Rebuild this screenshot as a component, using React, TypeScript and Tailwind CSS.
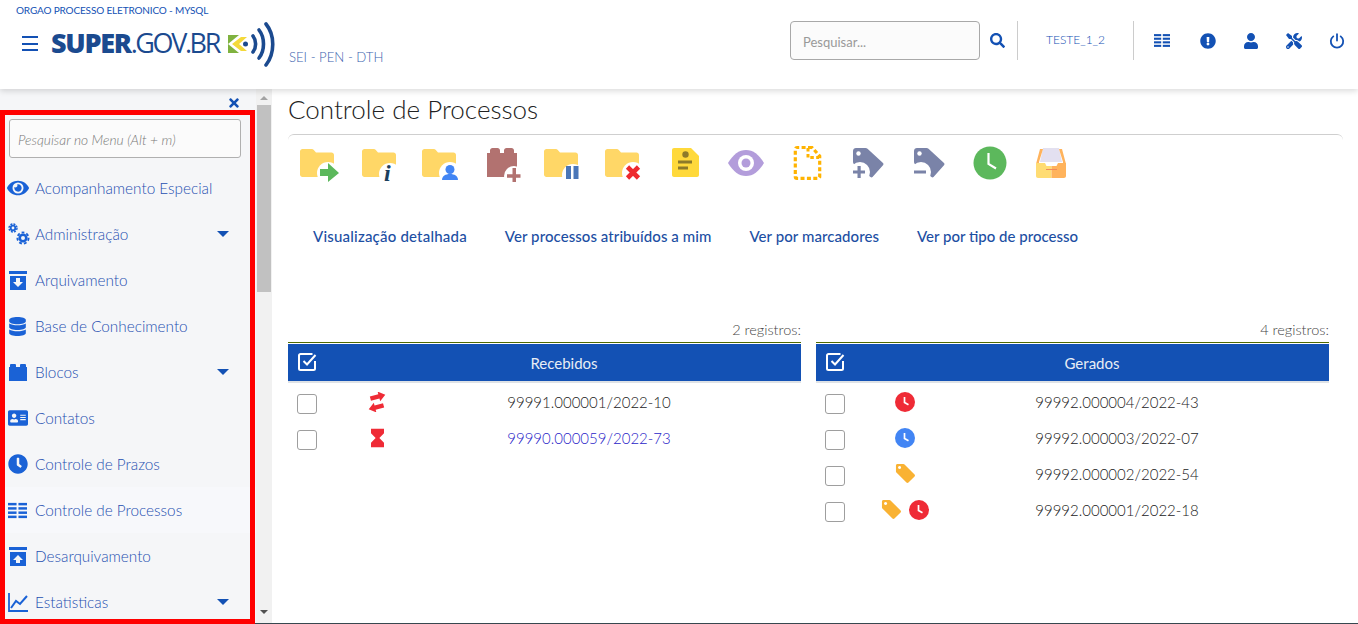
import React from "react";
import { FaEye, FaDatabase, FaAddressCard, FaClock, FaSearch, FaExclamationCircle, FaUser, FaTools, FaTimes } from "react-icons/fa";

const TableGlyph = ({ className = "" }: { className?: string }) => (
  <svg viewBox="0 0 20 16" className={className} fill="currentColor">
    <rect x="0" y="0" width="9" height="2.6" /><rect x="11" y="0" width="9" height="2.6" />
    <rect x="0" y="4.5" width="9" height="2.6" /><rect x="11" y="4.5" width="9" height="2.6" />
    <rect x="0" y="9" width="9" height="2.6" /><rect x="11" y="9" width="9" height="2.6" />
    <rect x="0" y="13.4" width="9" height="2.6" /><rect x="11" y="13.4" width="9" height="2.6" />
  </svg>
);

const ArchiveGlyph = ({ up = false }: { up?: boolean }) => (
  <svg viewBox="0 0 20 20" className="w-5 h-5" fill="currentColor">
    <rect x="1" y="1" width="18" height="3" />
    <path d="M2 6h16v14H2z" />
    <path d={up ? "M10 9l5 5h-3v3H8v-3H5z" : "M8 8h4v4h3l-5 5-5-5h3z"} fill="#f5f6f8" />
  </svg>
);

const BlockGlyph = () => (
  <svg viewBox="0 0 20 20" className="w-5 h-5" fill="currentColor">
    <path d="M1 19V5h1V3.2C2 2.5 2.500 2 3.200 2h3.600C7.500 2 8 2.500 8 3.200V5h4V3.200C12 2.500 12.500 2 13.200 2h3.600C17.500 2 18 2.500 18 3.200V5h1v14z" />
  </svg>
);

const GearsGlyph = () => (
  <svg viewBox="0 0 22 22" className="h-[22px] w-[22px]" fill="none" stroke="currentColor">
    <circle cx="5" cy="5" r="2.300" strokeWidth="1.800" />
    <circle cx="5" cy="5" r="4" strokeWidth="1.400" strokeDasharray="2 1.140" />
    <circle cx="15" cy="15" r="3.300" strokeWidth="2.600" />
    <circle cx="15" cy="15" r="5.600" strokeWidth="1.900" strokeDasharray="2.800 2.060" />
  </svg>
);

const ChartGlyph = () => (
  <svg viewBox="0 0 20 20" className="h-5 w-5" fill="none" stroke="currentColor">
    <path d="M1 1v18h19" strokeWidth="1.800" />
    <path d="M3 16l5-7 4 3 7-8" strokeWidth="2" />
  </svg>
);

const PowerGlyph = () => (
  <svg viewBox="0 0 16 16" className="ml-[27px] h-[16px] w-[16px]" fill="none" stroke="currentColor" strokeWidth="1.800" strokeLinecap="round">
    <path d="M8 1.200v6.300" />
    <path d="M4.300 3.400a6.200 6.200 0 1 0 7.400 0" />
  </svg>
);

const HeaderCheck = () => (
  <svg viewBox="0 0 20 20" className="ml-[9px] h-5 w-5" fill="none" stroke="#fff" strokeWidth="2">
    <path d="M15.500 2H3.500C2.700 2 2 2.700 2 3.500v13C2 17.300 2.700 18 3.500 18h13c.8 0 1.500-.7 1.500-1.500V9" />
    <path d="M6.500 9l3.500 3.500L18.500 3" />
  </svg>
);

const SwapArrows = () => (
  <svg viewBox="0 0 20 18" className="h-[20px] w-[22px]" fill="#ef2b36">
    <g transform="rotate(-15 10 9)">
      <path d="M5 2.500h8V0l6 4.500L13 9V6.500H5z" />
      <path d="M15 11.500H7V9l-6 4.500L7 18v-2.500h8z" />
    </g>
  </svg>
);

const Hourglass = () => (
  <svg viewBox="0 0 14 20" className="h-5 w-[13px]" fill="#ef2b36">
    <path d="M0 0h14v5L9 10l5 5v5H0v-5l5-5-5-5z" />
  </svg>
);

const Tag = ({ className = "" }: { className?: string }) => (
  <svg viewBox="0 0 22 22" className={className}>
    <path fillRule="evenodd" fill="#f9b233" d="M1 2.500C1 1.700 1.700 1 2.500 1h6.300c.5 0 .9.200 1.200.5l10.500 10.500c.6.600.6 1.500 0 2.100l-6.400 6.400c-.6.600-1.500.6-2.100 0L1.500 10C1.200 9.700 1 9.300 1 8.800zM4.800 3.200a1.600 1.600 0 1 0 .01 0z" />
  </svg>
);

const ClockDot = ({ color }: { color: string }) => (
  <svg viewBox="0 0 20 20" className="h-5 w-5">
    <circle cx="10" cy="10" r="10" fill={color} />
    <path d="M9.500 5v5.500l4 2.300" fill="none" stroke="#fff" strokeWidth="1.700" />
  </svg>
);

const Folder = () => (
  <path fill="#ffd767" d="M1 6.500C1 5.100 2.100 4 3.500 4h9.300c.8 0 1.500.4 2 1l2.200 2.500h15.500c1.400 0 2.500 1.100 2.500 2.500v19.500c0 1.400-1.100 2.500-2.500 2.500h-29C2.100 32 1 30.900 1 29.500z" />
);
const Bite = ({ cx = 29, cy = 28, r = 11 }: { cx?: number; cy?: number; r?: number }) => <circle cx={cx} cy={cy} r={r} fill="#fff" />;

const tagBody = "M5 6c0-1.700 1.300-3 3-3h9.500c.8 0 1.500.3 2 .8L35 18c.6.600.6 1.700 0 2.300L24.500 32c-.6.600-1.500.6-2 0L5.800 19c-.5-.5-.8-1.200-.8-2z";

const toolbar: React.ReactNode[] = [
  <><Folder /><Bite /><path fill="#5cb85c" d="M21 24h8v-6l11 10-11 9v-6h-8z" /></>,
  <><g transform="translate(1 0)"><Folder /></g><Bite cx={30} cy={29} /><text x="24" y="36" fontFamily="Liberation Serif, serif" fontStyle="italic" fontWeight="700" fontSize="24" fill="#1c3f5e">i</text></>,
  <><Folder /><Bite /><circle cx="29" cy="24.500" r="4.500" fill="#4285f4" /><path fill="#4285f4" d="M21 35c0-4 3.500-6 8-6s8 2 8 6z" /></>,
  <><path fill="#b27270" d="M5 32V8h3V5.500C8 4.100 9.100 3 10.500 3h5c1.400 0 2.500 1.100 2.500 2.500V8h4V5.500C22 4.100 23.100 3 24.500 3h5C30.900 3 32 4.100 32 5.500V8h3v24z" /><Bite cx={32} cy={31} r={10} /><path fill="#b27270" d="M30.500 23h3.500v6.300h4.500v3.400H34V37h-3.500v-4.300H25v-3.400h5.500z" /></>,
  <><Folder /><Bite cx={30} cy={30} /><rect x="23" y="21" width="5" height="13" fill="#4a76b8" /><rect x="30.500" y="21" width="5" height="13" fill="#4a76b8" /></>,
  <><Folder /><Bite /><path d="M23.500 22l11 11M34.500 22l-11 11" stroke="#ee2a2e" strokeWidth="4.600" fill="none" /></>,
  <><path fill="#ffd93b" d="M9 3h17l8 8v19c0 1.100-.9 2-2 2H9c-1.100 0-2-.9-2-2V5c0-1.100.9-2 2-2z" /><circle cx="20.500" cy="9.500" r="3.200" fill="#8d7a2a" /><rect x="13" y="15.500" width="14" height="3" fill="#8d7a2a" /><rect x="13" y="21.500" width="10" height="3" fill="#8d7a2a" /></>,
  <><path fill="#b39ddb" d="M2 18C7 9.500 13 5 20 5s13 4.500 18 13c-5 8.500-11 13-18 13S7 26.500 2 18z" /><circle cx="20" cy="18" r="8" fill="#fff" /><circle cx="20" cy="18" r="4.500" fill="#b39ddb" /></>,
  <><path fill="none" stroke="#ffb300" strokeWidth="3.200" strokeDasharray="4 2.400" d="M25 2.500H10C9 2.500 8.300 3.200 8.300 4.200v27.500c0 1 .7 1.600 1.700 1.600h21c1 0 1.700-.6 1.700-1.600V11z" /><path fill="none" stroke="#ffb300" strokeWidth="3" strokeDasharray="3.500 2.400" d="M21 3v9.500h11" /></>,
  <><path fill="#7a83a8" d={tagBody} /><circle cx="10.500" cy="8.500" r="2.200" fill="#fff" /><Bite cx={12} cy={27} r={10} /><path fill="#7a83a8" d="M9.500 21h3.200v4.500H17v3h-4.300V33H9.500v-4.500H5v-3h4.500z" /></>,
  <><path fill="#7a83a8" d={tagBody} /><circle cx="10.500" cy="8.500" r="2.200" fill="#fff" /><Bite cx={12} cy={27} r={10} /><rect x="5" y="25.500" width="12" height="3" fill="#7a83a8" /></>,
  <><circle cx="20" cy="18" r="16.500" fill="#5cb85c" /><path d="M18.500 8v11l7.500 4.500" fill="none" stroke="#fff" strokeWidth="2.200" /></>,
  <><path fill="#e3e0f0" d="M12 3h16l3 14H9z" /><path fill="#ffb35c" d="M9 4h3L8 17v2H5zM28 4h3l4 15h-3v-2z" /><path fill="#ffdc73" d="M5 18h9l1.500 3h5v12H7c-1.100 0-2-.9-2-2z" /><path fill="#ffb35c" d="M20.500 21h5L27 18h8v13c0 1.100-.9 2-2 2H20.500z" /><rect x="15" y="24" width="11" height="1" fill="#f08a5c" /></>,
];

const menu: { label: string; icon: React.ReactNode; caret?: boolean; active?: boolean }[] = [
  { label: "Acompanhamento Especial", icon: <FaEye className="-ml-[1px] h-[22px] w-[22px]" /> },
  { label: "Administração", icon: <GearsGlyph />, caret: true },
  { label: "Arquivamento", icon: <ArchiveGlyph /> },
  { label: "Base de Conhecimento", icon: <FaDatabase className="ml-[1px] h-[19px] w-[17px]" /> },
  { label: "Blocos", icon: <BlockGlyph />, caret: true },
  { label: "Contatos", icon: <FaAddressCard className="h-5 w-5" /> },
  { label: "Controle de Prazos", icon: <FaClock className="h-5 w-5" /> },
  { label: "Controle de Processos", icon: <TableGlyph className="h-[17px] w-[19px]" />, active: true },
  { label: "Desarquivamento", icon: <ArchiveGlyph up /> },
  { label: "Estatisticas", icon: <ChartGlyph />, caret: true },
];

const Check = () => <span className="block h-5 w-5 rounded-[3px] border border-[#9e9e9e] bg-white" />;

type Row = { icons: React.ReactNode; num: string; link?: boolean };

const ProcTable = ({ title, count, rows }: { title: string; count: string; rows: Row[] }) => (
  <section className="w-[513px]">
    <p className="h-[22px] text-right text-[14.5px] font-light leading-[22px] text-[#444]">{count}</p>
    <div className="mt-[1px] border-t border-[#4f6a00] pt-[1px]">
      <div className="grid h-[39px] grid-cols-[58px_436px] items-center border-b-2 border-[#dee2e6] bg-[#1351b4] text-white">
        <HeaderCheck />
        <span className="pt-[2px] text-center text-[15px] text-[#e8edf5]">{title}</span>
      </div>
    </div>
    <div className="mt-[2px]">
      {rows.map((r) => (
        <div key={r.num} className="grid h-9 grid-cols-[58px_62px_362px] items-center">
          <span className="ml-[9px] mt-[2px]"><Check /></span>
          <span className="flex -translate-y-[1px] items-center justify-center gap-[7px]">{r.icons}</span>
          <span className={`text-center text-[15px] font-light ${r.link ? "text-[#2a25c8]" : "text-[#222]"}`}>{r.num}</span>
        </div>
      ))}
    </div>
  </section>
);

export default function App() {
  return (
    <div className="relative flex h-[624px] w-full flex-col overflow-hidden bg-white font-['Lato','Open_Sans',sans-serif]">
      <header className="relative z-10 flex h-[89px] shrink-0 items-start bg-white shadow-[0_2px_6px_rgba(0,0,0,0.15)]">
        <div className="w-[420px] shrink-0 pl-[16px]">
          <p className="mt-[3px] h-[14px] text-[10px] leading-[14px] tracking-[-0.15px] text-[#1351b4]">ORGAO PROCESSO ELETRONICO - MYSQL</p>
          <div className="mt-[5px] flex items-start">
            <button className="ml-[6px] mt-[14px] flex h-[15px] w-4 flex-col justify-between" aria-label="menu">
              <span className="block h-[2px] w-4 bg-[#1351b4]" />
              <span className="block h-[2px] w-4 bg-[#1351b4]" />
              <span className="block h-[2px] w-4 bg-[#1351b4]" />
            </button>
            <p className="ml-[13px] mt-[5px] whitespace-nowrap font-['Open_Sans',sans-serif] text-[27px] leading-[32px] tracking-[-1.3px] text-[#1b4a8f]">
              <span className="font-extrabold">SUPER</span><span className="font-normal tracking-[-2.4px]">.GOV.BR</span>
            </p>
            <svg viewBox="0 0 52 46" className="ml-[7px] h-[46px] w-[52px] shrink-0">
              <rect x="2" y="13" width="22" height="18" fill="#7fb23f" />
              <path d="M2 22l11-9h11v18H13z" fill="#fff" />
              <path d="M6 22l9-7h6l-8 7 8 7h-6z" fill="#f4d93a" />
              <circle cx="19.500" cy="22" r="2.500" fill="#1b4a8f" />
              <g fill="none" stroke="#1b4a8f" strokeWidth="3.600" strokeLinecap="round">
                <path d="M27 14c3.500 4.500 3.500 11.500 0 16" />
                <path d="M33 8c6 7.500 6 20.500 0 28" />
                <path d="M40 2c9 11 9 29 0 41" />
              </g>
            </svg>
            <span className="ml-[11px] mt-[27px] whitespace-nowrap text-[13.2px] font-light leading-[16px] text-[#3a5fae]">SEI - PEN - DTH</span>
          </div>
        </div>
        <div className="ml-auto flex items-center pt-[21px]">
          <input readOnly placeholder="Pesquisar..." className="h-[39px] w-[190px] rounded-[4px] border border-[#a8a8a8] bg-[#fbfbfb] px-3 pt-[2px] text-[13px] outline-none placeholder:text-[#999]" />
          <FaSearch className="ml-[10px] h-[15px] w-[15px] text-[#1351b4]" />
          <span className="ml-[12px] h-[39px] w-px bg-[#ccc]" />
          <span className="w-[115px] -translate-y-[1px] text-center text-[12px] font-light text-[#1351b4]">TESTE_1_2</span>
          <span className="h-[39px] w-px bg-[#ccc]" />
          <div className="ml-[20px] flex items-center pr-[13px] text-[#1351b4]">
            <TableGlyph className="h-[15px] w-[16px]" />
            <FaExclamationCircle className="ml-[30px] h-[16px] w-[16px]" />
            <FaUser className="ml-[28px] h-[16px] w-[14px]" />
            <FaTools className="ml-[28px] h-[16px] w-[16px]" />
            <PowerGlyph />
          </div>
        </div>
      </header>

      <div className="flex min-h-0 flex-1">
        <aside className="flex w-[272px] shrink-0 overflow-hidden">
          <nav className="w-[256px] shrink-0 bg-[#f5f6f8]">
            <div className="flex h-[30px] items-start justify-end pr-[15px] pt-[7px]">
              <FaTimes className="h-[14px] w-[14px] text-[#1351b4]" />
            </div>
            <div className="mb-[7px] ml-[9px] w-[232px]">
              <input readOnly placeholder="Pesquisar no Menu (Alt + m)" className="h-[39px] w-full rounded-[3px] border border-[#b0b0b0] bg-[#fbfbfb] px-2 pt-[2px] text-[13.8px] font-light italic outline-none placeholder:text-[#777]" />
            </div>
            <ul>
              {menu.map((m) => (
                <li key={m.label} className={`flex h-[46px] items-center pl-[8px] pr-[27px] ${m.active ? "bg-[#f7f8fb]" : ""}`}>
                  <span className="flex w-[27px] shrink-0 text-[#1a62d6]">{m.icon}</span>
                  <span className="flex-1 text-[15.3px] font-light text-[#1f4fb0]">{m.label}</span>
                  {m.caret && <span className="h-0 w-0 border-x-[6px] border-t-[6px] border-x-transparent border-t-[#1351b4]" />}
                </li>
              ))}
            </ul>
          </nav>
          <div className="flex w-4 shrink-0 flex-col items-center bg-[#f1f1f1]">
            <span className="mt-[7px] h-0 w-0 border-x-[4px] border-b-[4px] border-x-transparent border-b-[#a3a3a3]" />
            <span className="mt-[5px] h-[187px] w-[14px] bg-[#c1c1c1]" />
            <span className="mb-[9px] mt-auto h-0 w-0 border-x-[4px] border-t-[4px] border-x-transparent border-t-[#505050]" />
          </div>
        </aside>

        <main className="min-w-0 flex-1 pl-[16px] pr-[15px]">
          <h1 className="h-[45px] pt-[4px] text-[26px] font-light leading-[32px] text-[#222]">Controle de Processos</h1>
          <div className="flex gap-[21px] rounded-t-[6px] border-t border-[#cfcfcf] pl-[11px] pt-[10px]">
            {toolbar.map((t, i) => (
              <svg key={i} viewBox="0 0 40 40" className="h-10 w-10 shrink-0">{t}</svg>
            ))}
          </div>
          <nav className="mt-[40px] flex gap-[38px] pl-[25px] text-[15px] font-medium tracking-[0.07px] text-[#1d4fa3]">
            <span className="tracking-[0.2px]">Visualização detalhada</span>
            <span>Ver processos atribuídos a mim</span>
            <span>Ver por marcadores</span>
            <span className="tracking-[0px]">Ver por tipo de processo</span>
          </nav>
          <div className="mt-[71px] flex gap-[15px]">
            <ProcTable
              title="Recebidos"
              count="2 registros:"
              rows={[
                { icons: <SwapArrows />, num: "99991.000001/2022-10" },
                { icons: <Hourglass />, num: "99990.000059/2022-73", link: true },
              ]}
            />
            <ProcTable
              title="Gerados"
              count="4 registros:"
              rows={[
                { icons: <ClockDot color="#ef2b36" />, num: "99992.000004/2022-43" },
                { icons: <ClockDot color="#4285f4" />, num: "99992.000003/2022-07" },
                { icons: <Tag className="h-[21px] w-[21px]" />, num: "99992.000002/2022-54" },
                { icons: <><Tag className="h-[21px] w-[21px]" /><ClockDot color="#ef2b36" /></>, num: "99992.000001/2022-18" },
              ]}
            />
          </div>
        </main>
      </div>

      <div className="h-px shrink-0 bg-[#37474f]" />
      <div className="pointer-events-none absolute left-0 top-[110px] z-20 h-[514px] w-[255px] border-[5px] border-[#ff0000]" />
    </div>
  );
}
